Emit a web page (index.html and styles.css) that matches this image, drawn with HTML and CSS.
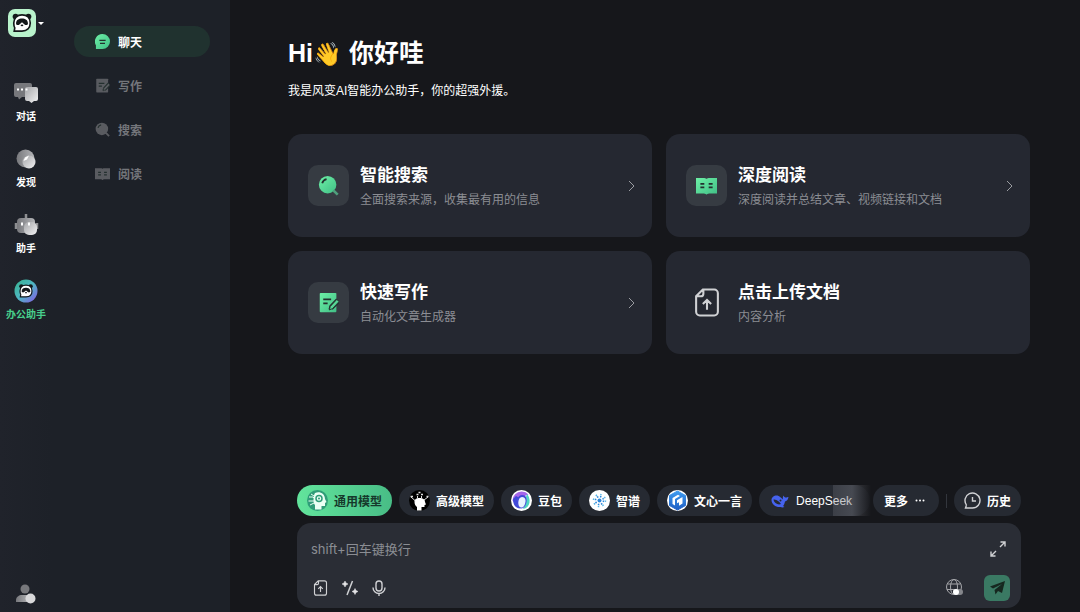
FILE: index.html
```html
<!DOCTYPE html>
<html lang="zh-CN">
<head>
  <meta charset="UTF-8" />
  <meta name="viewport" content="width=device-width, initial-scale=1.0" />
  <title>办公助手</title>
  <link rel="stylesheet" href="styles.css">
</head>
<body>
  <!-- shared gradients and icons -->
  <svg class="defs" width="0" height="0" aria-hidden="true">
    <defs>
      <linearGradient id="green" x1="0" y1="0" x2="1" y2="1">
        <stop offset="0" stop-color="#6df0a6" />
        <stop offset="1" stop-color="#41bf86" />
      </linearGradient>
      <linearGradient id="silver" x1="0" y1="0" x2="1" y2="1">
        <stop offset="0" stop-color="#a5a6a9" />
        <stop offset="1" stop-color="#f2f2f3" />
      </linearGradient>
      <linearGradient id="steel" x1="0" y1="0" x2="1" y2="0">
        <stop offset="0" stop-color="#77787c" />
        <stop offset="1" stop-color="#b4b5b8" />
      </linearGradient>
      <linearGradient id="ring" x1="0" y1="0" x2="1" y2="1">
        <stop offset="0" stop-color="#36b48c" />
        <stop offset="0.5" stop-color="#4fb6c4" />
        <stop offset="1" stop-color="#8a55e8" />
      </linearGradient>
      <linearGradient id="blue" x1="0" y1="0" x2="0" y2="1">
        <stop offset="0" stop-color="#3f9cf0" />
        <stop offset="1" stop-color="#1f5fc4" />
      </linearGradient>
    </defs>
    <symbol id="panda" viewBox="0 0 24 24">
      <circle cx="5" cy="5" r="3.200" fill="#14181a" />
      <circle cx="19" cy="5" r="3.200" fill="#14181a" />
      <path d="M12 3.200c5.400 0 9 3.300 9 8.800s-3.600 8.800-9 8.800H3.500l.6-3.500C3.200 15.800 3 14.200 3 12c0-5.500 3.600-8.800 9-8.800z" fill="#fff" stroke="#14181a" stroke-width="1.800" />
      <path d="M5.500 12.500C5.500 8.500 8.500 7 12 7s6.500 1.500 6.500 5.500c0 1.800-2.500 2.300-3.700 1L12 11.200l-2.800 2.300c-1.200 1.300-3.700.8-3.700-1z" fill="#14181a" />
      <ellipse cx="12" cy="14.500" rx="1.500" ry="1" fill="#14181a" />
    </symbol>
    <symbol id="write" viewBox="0 0 24 24">
      <path d="M3 1h17a1 1 0 0 1 1 1v20a1 1 0 0 1-1 1H3a1 1 0 0 1-1-1V2a1 1 0 0 1 1-1z" />
      <path class="cut" d="M6 8.500h9M6 13h5" />
      <path class="cut" d="M13 20l1-4 7.500-8" />
      <path class="cut thick" d="M15 18.500l8-8" />
      <path d="M13 20.500l1-4 7.500-8 2.500 2.500-7.500 8z" />
      <path class="cut hair" d="M13 20.500l1-4 7.500-8 2.500 2.500-7.500 8z" />
    </symbol>
    <symbol id="search" viewBox="0 0 24 24">
      <circle cx="11" cy="11" r="10" />
      <path class="handle" d="M17.500 17.500l5 5" />
      <path class="cut" d="M4.800 9.500a6.500 6.500 0 0 1 5-4.800" />
    </symbol>
    <symbol id="read" viewBox="0 0 24 24">
      <path d="M0 3.500h9.500c1.500 0 2.500 1 2.500 1s1-1 2.500-1H24V21h-9c-1.500 0-3 1.200-3 1.200S10.500 21 9 21H0z" />
      <path class="cut" d="M5 10h4.500M5 14h4.500M14.500 10H19M14.500 14H19" />
    </symbol>
    <symbol id="upload" viewBox="0 0 24 28">
      <path d="M8 1.500h11a3.500 3.500 0 0 1 3.500 3.500v18a3.500 3.500 0 0 1-3.500 3.500H5A3.500 3.500 0 0 1 1.500 23V8zM8.500 2v3.500a2.500 2.500 0 0 1-2.500 2.500H2M12 21v-9M8 15.500l4-4 4 4" />
    </symbol>
  </svg>

  <div class="app">
    <aside class="rail">
      <button class="logo" aria-label="切换账号">
        <span class="logo-box"><svg width="22" height="22"><use href="#panda" /></svg></span>
        <span class="caret"></span>
      </button>
      <nav class="rail-nav">
        <a class="rail-item" href="#">
          <svg width="26" height="26" viewBox="0 0 26 26">
            <path d="M3 3h14a2 2 0 0 1 2 2v10a2 2 0 0 1-2 2H9l-3 2.500L5 17H3a2 2 0 0 1-2-2V5a2 2 0 0 1 2-2z" fill="#77787c" />
            <path d="M14 7h9a2 2 0 0 1 2 2v10a2 2 0 0 1-2 2h-2l-2.500 2-2.500-2h-2a2 2 0 0 1-2-2V9a2 2 0 0 1 2-2z" fill="url(#silver)" />
            <path d="M4 9.500h2M8 9.500h2M12.500 9.500h2" stroke="#fff" stroke-width="2" />
          </svg>
          对话
        </a>
        <a class="rail-item" href="#">
          <svg width="26" height="26" viewBox="0 0 26 26">
            <circle cx="12.500" cy="12.500" r="9" fill="url(#steel)" />
            <circle cx="16" cy="16" r="6.500" fill="url(#silver)" />
            <path d="M10.500 15l1.500-3.500 4-2-2 4z" fill="#fff" />
          </svg>
          发现
        </a>
        <a class="rail-item" href="#">
          <svg width="26" height="26" viewBox="0 0 26 26">
            <path d="M13 2v5M3 11v6M24 11v6" stroke="#8d8e91" stroke-width="2.500" />
            <rect x="4" y="6" width="18" height="15" rx="4" fill="url(#steel)" />
            <rect x="11" y="10" width="13" height="13" rx="5" fill="url(#silver)" />
            <path d="M9 10.500v3M16 10.500v3" stroke="#fff" stroke-width="2" />
          </svg>
          助手
        </a>
        <a class="rail-item current" href="#">
          <svg width="26" height="26" viewBox="0 0 26 26">
            <circle cx="13" cy="13" r="11.500" fill="url(#ring)" />
            <use href="#panda" x="5" y="5" width="16" height="16" />
          </svg>
          办公助手
        </a>
      </nav>
      <button class="user" aria-label="我的">
        <svg width="20" height="20" viewBox="0 0 20 20">
          <circle cx="9" cy="5" r="4.500" fill="#77787c" />
          <path d="M0 18v-2c0-3 3-5 6-5h8v7z" fill="url(#steel)" />
          <circle cx="14.500" cy="14.500" r="5" fill="#d8d8da" />
        </svg>
      </button>
    </aside>

    <nav class="sidebar">
      <a class="side-item active" href="#">
        <svg width="15" height="15" viewBox="0 0 24 24">
          <path d="M12 0a12 12 0 1 1 0 24H1.500v-6A12 12 0 0 1 12 0z" fill="url(#green)" />
          <path class="cut" d="M7 10h10M8 15h8" />
        </svg>
        聊天
      </a>
      <a class="side-item" href="#"><svg width="15" height="15"><use href="#write" /></svg>写作</a>
      <a class="side-item" href="#"><svg width="15" height="15"><use href="#search" /></svg>搜索</a>
      <a class="side-item" href="#"><svg width="15" height="15"><use href="#read" /></svg>阅读</a>
    </nav>

    <main class="main">
      <h1>Hi<span class="wave">👋</span> 你好哇</h1>
      <p class="intro">我是风变AI智能办公助手，你的超强外援。</p>

      <div class="cards">
        <a class="card" href="#">
          <span class="card-icon"><svg width="21" height="21"><use href="#search" /></svg></span>
          <span class="card-text">
            <strong>智能搜索</strong>
            <span>全面搜索来源，收集最有用的信息</span>
          </span>
          <svg class="arrow" width="8" height="12" viewBox="0 0 8 12"><path d="M1 1l5 5-5 5" /></svg>
        </a>
        <a class="card" href="#">
          <span class="card-icon"><svg width="21" height="21"><use href="#read" /></svg></span>
          <span class="card-text">
            <strong>深度阅读</strong>
            <span>深度阅读并总结文章、视频链接和文档</span>
          </span>
          <svg class="arrow" width="8" height="12" viewBox="0 0 8 12"><path d="M1 1l5 5-5 5" /></svg>
        </a>
        <a class="card" href="#">
          <span class="card-icon"><svg width="21" height="21"><use href="#write" /></svg></span>
          <span class="card-text">
            <strong>快速写作</strong>
            <span>自动化文章生成器</span>
          </span>
          <svg class="arrow" width="8" height="12" viewBox="0 0 8 12"><path d="M1 1l5 5-5 5" /></svg>
        </a>
        <button class="card">
          <span class="card-icon plain"><svg class="line" width="26" height="29"><use href="#upload" /></svg></span>
          <span class="card-text">
            <strong>点击上传文档</strong>
            <span>内容分析</span>
          </span>
        </button>
      </div>

      <div class="composer">
        <div class="toolbar">
          <div class="models">
            <button class="pill selected">
              <svg width="21" height="21" viewBox="0 0 21 21">
                <circle cx="10.500" cy="10.500" r="10.500" fill="#2f9c78" />
                <path d="M8 3c5-2 10 1 10 6l1.500 3-1.500 1v3h-3.500v3.500H8V15c-2-1.500-2-9 0-12z" fill="#eafff4" />
                <circle cx="12" cy="8.500" r="3" fill="none" stroke="#2f9c78" stroke-width="1.500" />
                <path d="M2 7h4l2 2M1.500 11H7M3 15l4-2M4 4l3 2" stroke="#eafff4" fill="none" />
                <circle cx="12" cy="8.500" r="1" fill="#2f9c78" />
              </svg>
              通用模型
            </button>
            <button class="pill">
              <svg width="21" height="21" viewBox="0 0 21 21">
                <circle cx="10.500" cy="10.500" r="10.500" fill="#000" />
                <path d="M5.500 12c0-3 2-4 5-4s5.500 1 5.500 4l1 2.500-1.500.5v2h-3v3.500H8V17c-1.500-1-2.500-3-2.500-5z" fill="#fff" />
                <path d="M6.500 11L2 7M15 10l4-3M8.500 8.500V6M12.500 8.500V6" stroke="#ddd" />
                <path d="M1.500 6.500H4M7.500 4.500h2M12 4.500h2M9.500 2.500h2M17.500 6.500h2" stroke="#ddd" stroke-width="1.500" />
              </svg>
              高级模型
            </button>
            <button class="pill">
              <svg width="21" height="21" viewBox="0 0 21 21">
                <circle cx="10.500" cy="10.500" r="10.500" fill="#fff" />
                <path d="M10.500 1.500a9 9 0 0 0-9 9l4 5c-1-7 2-9 7-9l5-2a9 9 0 0 0-7-3z" fill="#a565ea" />
                <path d="M2 9c0 6 3 9.500 7 9.500-3-3-3.500-8-1-11L5 6z" fill="#4149d8" />
                <path d="M16 4c4 4 4 14-4 15 2-3 4-7 3-12z" fill="#4fd6c3" />
                <path d="M11 5c5 0 5.500 5 4 9-1 3-3 4.500-5 4.500C4 18 5 5 11 5z" fill="#4149d8" />
                <path d="M11 7c4 0 4 4 3 7s-2.500 3.500-4 3.500C6 17 6.500 7 11 7z" fill="#e9f3ff" />
              </svg>
              豆包
            </button>
            <button class="pill">
              <svg width="21" height="21" viewBox="0 0 21 21">
                <circle cx="10.500" cy="10.500" r="10.500" fill="#fff" />
                <circle cx="10.500" cy="10.500" r="2" fill="#2f86d8" />
                <circle class="dots" cx="10.500" cy="10.500" r="4" />
                <circle class="dots wide" cx="10.500" cy="10.500" r="6" />
              </svg>
              智谱
            </button>
            <button class="pill">
              <svg width="21" height="21" viewBox="0 0 21 21">
                <circle cx="10.500" cy="10.500" r="10.500" fill="#fff" />
                <path d="M10.500 1l8 4.500v10l-8 4.500-8-4.500v-10z" fill="url(#blue)" stroke="url(#blue)" stroke-linejoin="round" />
                <path d="M5.500 8l5.500-3.300L13 6 8 9v6.500L5.500 14zM10 10.200l5.500-3.200v6.500L12 15.800v-3.500l-2 1z" fill="#fff" />
              </svg>
              文心一言
            </button>
            <button class="pill">
              <svg width="21" height="21" viewBox="0 0 21 21">
                <path d="M2.500 10c0-3 3-5 6-4.500C11 6 12 8 14 9.500c-.5-2 0-3 .5-4 .5 1.500 1.500 2 2.500 2s1.500-.5 2.500-.5c-.5 3-2 4-3.500 4.500-.5 2.500-1 3.500-2 4.500l1.500 1c-2 .8-3 .3-4 0C7 17.500 2.500 14.500 2.500 10z" fill="#4663ee" />
                <path d="M4.500 9.500c3-.5 6 2 7.500 4.500-3 1.500-7-1-7.500-4.500z" fill="#262a32" />
                <circle cx="11.500" cy="10.500" r="1" fill="#262a32" />
              </svg>
              DeepSeek
            </button>
          </div>
          <button class="pill more">更多
            <svg width="12" height="3" viewBox="0 0 12 3" fill="#fff"><circle cx="2.500" cy="1.500" r="1" /><circle cx="6" cy="1.500" r="1" /><circle cx="9.500" cy="1.500" r="1" /></svg>
          </button>
          <span class="divider"></span>
          <button class="pill">
            <svg class="line medium" width="17" height="17" viewBox="0 0 17 17"><path d="M2.500 13A7.500 7.500 0 1 1 8.500 16H1.500l1-3M8.500 5v4h3.500" /></svg>
            历史
          </button>
        </div>

        <form class="box">
          <textarea rows="1" placeholder="shift+回车键换行" aria-label="输入消息"></textarea>
          <button type="button" class="icon-btn expand" aria-label="展开">
            <svg class="line medium" width="16" height="16" viewBox="0 0 16 16"><path d="M10.500 1H15v4.500M15 1l-5 5M5.500 15H1v-4.500M1 15l5-5" /></svg>
          </button>
          <div class="tools">
            <button type="button" class="icon-btn" aria-label="上传"><svg class="line" width="15" height="16"><use href="#upload" /></svg></button>
            <button type="button" class="icon-btn" aria-label="指令">
              <svg width="16" height="16" viewBox="0 0 16 16">
                <path d="M10.500 1L5 15" stroke="#d0d1d4" stroke-width="1.500" />
                <path d="M3 1l1 2 2 1-2 1-1 2-1-2-2-1 2-1zM13 8.500l1 2 2 1-2 1-1 2-1-2-2-1 2-1z" fill="#e4e4e6" stroke="#e4e4e6" stroke-width="0.500" />
              </svg>
            </button>
            <button type="button" class="icon-btn" aria-label="语音">
              <svg class="line medium" width="14" height="16" viewBox="0 0 14 16"><rect x="4" y="1" width="6" height="10" rx="3" /><path d="M1 7.500a6 6 0 0 0 12 0M7 13.500V16" /></svg>
            </button>
          </div>
          <div class="actions">
            <button type="button" class="icon-btn" aria-label="联网">
              <svg width="18" height="18" viewBox="0 0 18 18">
                <g fill="none" stroke="#a5a6aa"><circle cx="8" cy="8" r="7.500" /><ellipse cx="8" cy="8" rx="3.500" ry="7.500" /><path d="M1.500 5h13M1 10.500h9" /></g>
                <rect x="7" y="10" width="10" height="6" rx="3" fill="#85878c" />
                <circle cx="10" cy="13" r="3" fill="#fff" />
              </svg>
            </button>
            <button type="submit" class="send" aria-label="发送">
              <svg width="15" height="14" viewBox="0 0 15 14"><path d="M0 5.500L15 0l-3 12-4-2-2.500 3.500L4.500 9 12 3 3 7.500z" fill="#16271f" /></svg>
            </button>
          </div>
        </form>
      </div>
    </main>
  </div>
</body>
</html>
```
FILE: styles.css
```css
* {
  box-sizing: border-box;
}

body {
  margin: 0;
  background: #16171b;
  color: #fff;
  font-family: "Liberation Sans", "Noto Sans CJK SC", sans-serif;
  font-size: 12px;
}

a {
  color: inherit;
  text-decoration: none;
}

button {
  padding: 0;
  border: none;
  background: none;
  color: inherit;
  font: inherit;
  cursor: pointer;
}

svg {
  flex: none;
  display: block;
}

.defs {
  position: absolute;
}

.app {
  display: flex;
  min-height: 100vh;
}

/* left rail */
.rail {
  width: 52px;
  flex: none;
  display: flex;
  flex-direction: column;
  align-items: center;
  padding: 9px 0 8px;
  background: linear-gradient(90deg, #20232b, #1d2128);
}

.logo {
  display: flex;
  align-items: center;
  gap: 2px;
}

.logo-box {
  width: 28px;
  height: 28px;
  display: grid;
  place-items: center;
  border-radius: 7px;
  background: #b9f3cc;
}

.caret {
  border: 3px solid transparent;
  border-top-color: #fff;
  border-bottom: 0;
}

.rail-nav {
  display: flex;
  flex-direction: column;
  gap: 22px;
  margin-top: 43px;
}

.rail-item {
  display: flex;
  flex-direction: column;
  align-items: center;
  gap: 4px;
  font-size: 10px;
  font-weight: bold;
  line-height: 14px;
}

.rail-item.current {
  color: #48cf8c;
}

.user {
  margin-top: auto;
}

/* second column */
.sidebar {
  width: 178px;
  flex: none;
  display: flex;
  flex-direction: column;
  gap: 13px;
  padding: 26px 20px 0 22px;
  background: #1d2128;
}

.side-item {
  --handle: #595b60;
  height: 31px;
  display: flex;
  align-items: center;
  gap: 8px;
  padding-left: 21px;
  border-radius: 16px;
  color: #74767b;
  fill: #595b60;
  font-weight: bold;
}

.side-item.active {
  background: #20322f;
  color: #fff;
}

.cut {
  fill: none;
  stroke: #24302f;
  stroke-width: 2;
}

.cut.thick {
  stroke-width: 5;
}

.cut.hair {
  stroke-width: 1;
}

.handle {
  fill: none;
  stroke: var(--handle, #4f9f7c);
  stroke-width: 3;
}

/* main area */
.main {
  flex: 1;
  min-width: 0;
  display: flex;
  flex-direction: column;
  padding: 34px 50px 4px 58px;
}

h1 {
  margin: 0;
  font-size: 25px;
  line-height: 38px;
}

.wave {
  font-size: 23px;
  line-height: 24px;
}

.intro {
  margin: 10px 0 0;
  line-height: 18px;
}

.cards {
  display: grid;
  grid-template-columns: 1fr 1fr;
  gap: 14px;
  margin-top: 34px;
}

.card {
  min-height: 103px;
  display: flex;
  align-items: center;
  gap: 11px;
  padding: 0 16px 0 20px;
  border-radius: 14px;
  background: #252831;
  text-align: left;
}

.card-icon {
  width: 41px;
  height: 41px;
  display: grid;
  place-items: center;
  border-radius: 10px;
  background: #363b42;
  fill: url(#green);
}

.card-icon.plain {
  background: none;
}

.card-text {
  flex: 1;
  display: flex;
  flex-direction: column;
  color: #8b8d93;
  line-height: 20px;
}

.card-text strong {
  color: #fff;
  font-size: 17px;
  line-height: 28px;
}

.arrow {
  fill: none;
  stroke: #9a9ca1;
}

.line {
  fill: none;
  stroke: #d0d1d4;
  stroke-width: 2;
}

.medium {
  stroke-width: 1.400;
}

/* chat composer */
.composer {
  margin: auto 9px 0;
}

.toolbar {
  display: flex;
  align-items: center;
  margin-bottom: 7px;
}

.models {
  position: relative;
  flex: 1;
  min-width: 0;
  display: flex;
  gap: 7px;
  margin-right: 2px;
  overflow: hidden;
}

.models::after {
  content: "";
  position: absolute;
  top: 0;
  right: 0;
  width: 38px;
  height: 100%;
  background: linear-gradient(90deg, rgba(110, 112, 120, 0.3), rgba(110, 112, 120, 0.45) 50%, rgba(22, 23, 27, 0.9));
}

.pill {
  height: 31px;
  flex: none;
  display: flex;
  align-items: center;
  gap: 6px;
  padding: 0 10px;
  border-radius: 16px;
  background: #262a32;
  font-weight: bold;
  white-space: nowrap;
}

.models .pill:last-child {
  padding-right: 18px;
  font-weight: normal;
}

.pill.selected {
  background: linear-gradient(90deg, #62e49c, #48bd86);
  color: #16382b;
}

.pill.more {
  padding: 0 13px 0 11px;
}

.dots {
  fill: none;
  stroke: #2f86d8;
  stroke-width: 1.500;
  stroke-dasharray: 1.500 1.640;
}

.dots.wide {
  stroke: #58b8e8;
  stroke-dasharray: 1.500 3.210;
}

.divider {
  width: 1px;
  height: 14px;
  margin: 0 7px;
  background: #33363d;
}

.box {
  display: grid;
  grid-template-columns: 1fr auto;
  row-gap: 13px;
  padding: 13px 11px 7px 14px;
  border-radius: 14px;
  background: #2a2d35;
}

textarea {
  height: 26px;
  padding: 0;
  border: none;
  outline: none;
  resize: none;
  background: none;
  color: #fff;
  font-family: Inter, "Noto Sans CJK SC", sans-serif;
  font-size: 13px;
  line-height: 26px;
}

textarea::placeholder {
  color: #8b8d93;
}

.expand {
  justify-self: end;
  margin-right: 4px;
}

.tools,
.actions {
  display: flex;
  align-items: center;
}

.tools {
  gap: 14px;
  padding-left: 2px;
}

.actions {
  gap: 20px;
}

.send {
  width: 26px;
  height: 26px;
  display: grid;
  place-items: center;
  border-radius: 6px;
  background: #3a7963;
}
```
